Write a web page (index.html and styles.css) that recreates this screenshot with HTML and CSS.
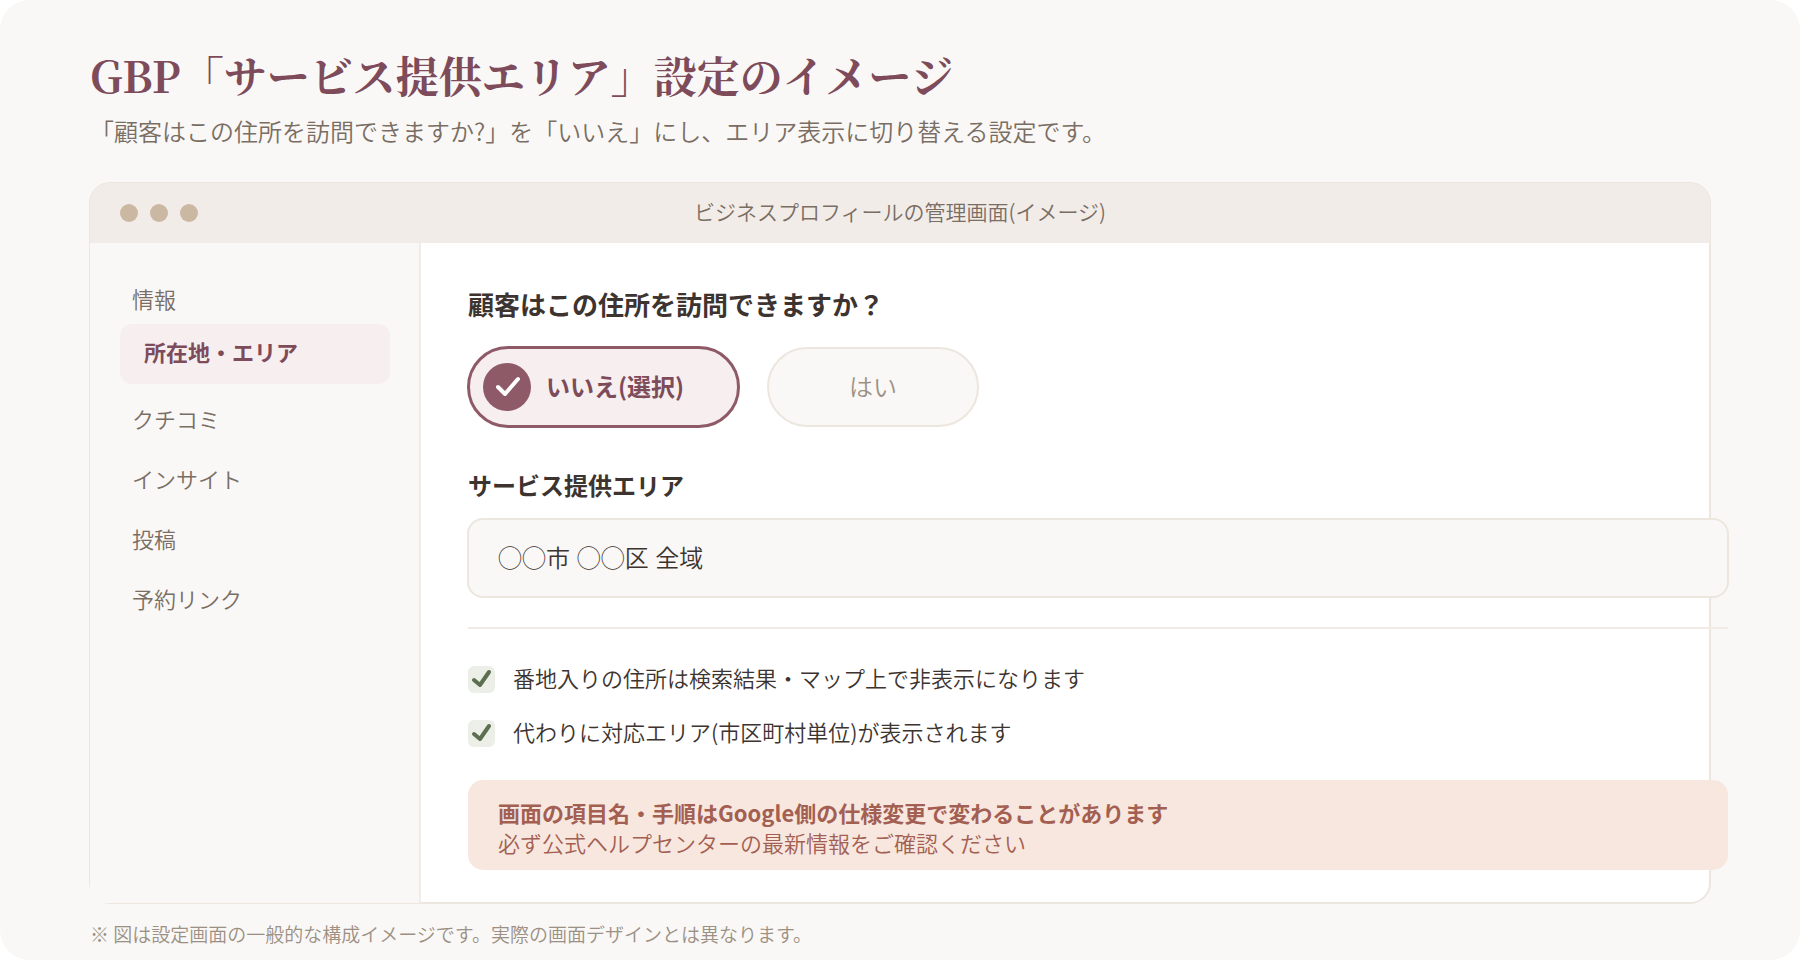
FILE: index.html
```html
<!DOCTYPE html>
<html lang="ja">
<head>
  <meta charset="UTF-8">
  <meta name="viewport" content="width=device-width, initial-scale=1.0">
  <title>GBP「サービス提供エリア」設定のイメージ</title>
  <link rel="stylesheet" href="styles.css">
</head>
<body>
  <div class="page">
    <header class="page-header">
      <h1>GBP「サービス提供エリア」設定のイメージ</h1>
      <p>「顧客はこの住所を訪問できますか?」を「いいえ」にし、エリア表示に切り替える設定です。</p>
    </header>

    <div class="window">
      <div class="titlebar">
        <div class="dots">
          <span></span>
          <span></span>
          <span></span>
        </div>
        <p>ビジネスプロフィールの管理画面(イメージ)</p>
      </div>

      <div class="window-body">
        <!-- Sidebar -->
        <nav class="sidebar">
          <a href="#info">情報</a>
          <a href="#area" class="active">所在地・エリア</a>
          <a href="#reviews">クチコミ</a>
          <a href="#insights">インサイト</a>
          <a href="#posts">投稿</a>
          <a href="#booking">予約リンク</a>
        </nav>

        <!-- Settings -->
        <main class="settings">
          <h2 id="visit-question">顧客はこの住所を訪問できますか？</h2>
          <div class="choices" role="radiogroup" aria-labelledby="visit-question">
            <label class="choice choice-no">
              <input type="radio" name="visit" value="no" checked>
              <svg class="choice-icon" viewBox="0 0 48 48" aria-hidden="true">
                <circle cx="24" cy="24" r="24" />
                <path d="M15 24 L22 31 L35 16" />
              </svg>
              <span>いいえ(選択)</span>
            </label>
            <label class="choice choice-yes">
              <input type="radio" name="visit" value="yes">
              <span>はい</span>
            </label>
          </div>

          <label class="field-label" for="service-area">サービス提供エリア</label>
          <input class="field" type="text" id="service-area" value="◯◯市 ◯◯区 全域">

          <hr>

          <div class="checks">
            <label class="check">
              <input type="checkbox" checked>
              <svg viewBox="0 0 27 27" aria-hidden="true"><path d="M6 14 L12 19 L21 6" /></svg>
              <span>番地入りの住所は検索結果・マップ上で非表示になります</span>
            </label>
            <label class="check">
              <input type="checkbox" checked>
              <svg viewBox="0 0 27 27" aria-hidden="true"><path d="M6 14 L12 19 L21 6" /></svg>
              <span>代わりに対応エリア(市区町村単位)が表示されます</span>
            </label>
          </div>

          <div class="notice">
            <strong>画面の項目名・手順はGoogle側の仕様変更で変わることがあります</strong>
            <p>必ず公式ヘルプセンターの最新情報をご確認ください</p>
          </div>
        </main>
      </div>
    </div>

    <footer>
      <p>※ 図は設定画面の一般的な構成イメージです。実際の画面デザインとは異なります。</p>
    </footer>
  </div>
</body>
</html>
```

FILE: styles.css
```css
/* General Styles */
* {
  margin: 0;
  padding: 0;
  box-sizing: border-box;
}

body {
  font-family: "Noto Sans CJK JP", sans-serif;
  font-size: 22px;
  font-weight: 350;
  line-height: 30px;
  background-color: #fff;
  color: #3d3430;
}

.page {
  min-height: 100vh;
  padding: 44px 90px 8px;
  background-color: #f9f8f6;
  border-radius: 30px;
}

/* Header */
.page-header h1 {
  font-family: "Noto Serif CJK JP", "Liberation Serif", "Noto Sans CJK JP", serif;
  font-size: 43px;
  font-weight: bold;
  line-height: 62px;
  color: #7d4b5a;
}

.page-header p {
  margin: 7px 0 33px;
  font-size: 24px;
  line-height: 36px;
  color: #7a6e64;
}

/* Window */
.window {
  margin: 0 -1px;
  background-color: #fff;
  border: 2px solid #ede6df;
  border-radius: 21px;
}

/* The bar and the sidebar sit over the inner half of the border */
.titlebar {
  display: grid;
  grid-template-columns: 1fr auto 1fr;
  align-items: center;
  height: 60px;
  margin: -1px -1px 0;
  padding: 0 30px;
  background-color: #f2ece8;
  border-radius: 20px 20px 0 0;
}

.titlebar p {
  padding-bottom: 4px;
  font-size: 21px;
  color: #7a6e64;
}

.dots {
  display: flex;
  gap: 12px;
}

.dots span {
  width: 18px;
  height: 18px;
  border-radius: 50%;
  background-color: #cbb8a3;
}

.window-body {
  display: flex;
}

/* Sidebar */
.sidebar {
  display: flex;
  flex-direction: column;
  flex: 0 0 331px;
  margin: 0 0 -1px -1px;
  padding: 33px 29px 0 30px;
  background-color: #f9f8f6;
  border-right: 2px solid #f2ece8;
}

.sidebar a {
  padding: 13px 12px 17px;
  color: #7a6e64;
  text-decoration: none;
}

.sidebar a:first-child {
  padding: 7px 12px 11px;
}

.sidebar a.active {
  margin-bottom: 6px;
  padding: 12px 24px 18px;
  background-color: #f7eeef;
  border-radius: 12px;
  color: #7d4b5a;
  font-weight: bold;
}

/* Settings */
.settings {
  flex: 1;
  min-width: 0;
  margin-right: -20px;
  padding: 42px 0 32px 46px;
}

.settings h2 {
  padding-left: 1px;
  font-size: 26px;
  line-height: 38px;
}

.choices {
  display: flex;
  gap: 27px;
  align-items: center;
  margin: 23px 0 39px;
}

.choice {
  display: flex;
  align-items: center;
  height: 80px;
  border: 2px solid #ede6df;
  border-radius: 41px;
  font-size: 24px;
  cursor: pointer;
}

.choice input {
  position: absolute;
  opacity: 0;
}

.choice-no {
  gap: 15px;
  height: 82px;
  width: 273px;
  padding-left: 13px;
  background-color: #f7eeef;
  border: 3px solid #8e5a68;
  color: #7d4b5a;
  font-weight: bold;
}

.choice-yes {
  justify-content: center;
  width: 212px;
  background-color: #f9f8f6;
  color: #9c9084;
}

.choice span {
  padding-bottom: 2px;
}

.choice-icon {
  width: 48px;
  height: 48px;
}

.choice-icon circle {
  fill: #8e5a68;
}

.choice-icon path {
  fill: none;
  stroke: #fff;
  stroke-width: 4;
  stroke-linecap: round;
  stroke-linejoin: round;
}

.field-label {
  display: block;
  padding-left: 1px;
  font-size: 24px;
  font-weight: bold;
  line-height: 36px;
}

.field {
  display: block;
  width: 100%;
  height: 80px;
  margin-top: 15px;
  padding: 0 29px 3px;
  background-color: #f9f8f6;
  border: 2px solid #ede6df;
  border-radius: 16px;
  font-family: "Liberation Sans", "Noto Sans CJK JP", sans-serif;
  font-size: 24px;
  font-weight: inherit;
  color: inherit;
}

.settings hr {
  height: 2px;
  margin: 29px 1px 33px;
  border: none;
  background-color: #f0ebe6;
}

.checks {
  display: flex;
  flex-direction: column;
  gap: 19px;
  padding-left: 1px;
}

.check {
  display: grid;
  grid-template-columns: 27px 1fr;
  column-gap: 18px;
  align-items: center;
}

.check span {
  padding-bottom: 5px;
}

.check input,
.check svg {
  grid-area: 1 / 1;
  width: 27px;
  height: 27px;
}

.check input {
  appearance: none;
  background-color: #ebefe8;
  border-radius: 6px;
}

.check svg {
  pointer-events: none;
  fill: none;
  stroke: #5c7050;
  stroke-width: 4;
  stroke-linecap: round;
  stroke-linejoin: round;
}

.notice {
  margin: 29px 1px 0;
  padding: 17px 30px 13px;
  background-color: #f8e7df;
  border-radius: 15px;
  color: #a35f52;
}

.notice strong {
  display: block;
  font-weight: bold;
}

/* Footer */
footer {
  padding-top: 15px;
  font-size: 19px;
  color: #9c9084;
}
```
